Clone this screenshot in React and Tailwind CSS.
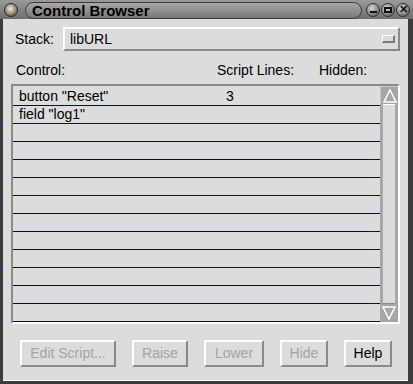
import React from "react";

const rows = [
  { name: 'button "Reset"', lines: "3" },
  { name: 'field "log1"', lines: "" },
];

function TitleButton({ children }) {
  return (
    <div className="w-[14px] h-[14px] rounded-full bg-[radial-gradient(circle_at_40%_35%,#d8d8d8,#8a8a8a_55%,#3c3c3c)] border border-[#333] flex items-center justify-center">
      {children}
    </div>
  );
}

function Button({ label, disabled, width }) {
  return (
    <div
      className={`h-[27px] ${width} border-t-2 border-l-2 border-b-2 border-r-2 border-t-white border-l-white border-b-[#8a8a8a] border-r-[#8a8a8a] flex items-center justify-center text-[14px] ${
        disabled ? "text-[#a4a4a4]" : "text-black"
      }`}
    >
      {label}
    </div>
  );
}

export default function App() {
  const allRows = Array.from({ length: 13 }, (_, i) => rows[i] || { name: "", lines: "" });

  return (
    <div className="w-[413px] h-[384px] flex flex-col bg-[#3c3c3c] font-['Liberation_Sans',Arial,sans-serif] overflow-hidden">
      {/* title bar */}
      <div className="h-[19px] shrink-0 flex items-center bg-[linear-gradient(#9a9a9a,#6e6e6e)] pl-[4px] pr-[1px]">
        <div className="w-[14px] h-[14px] rounded-full bg-[radial-gradient(circle_at_45%_40%,#f4ece2,#a89888_45%,#3a3432)] border border-[#2a2a2a]" />
        <div className="ml-[7px] w-[337px] h-[17px] mt-[2px] rounded-[9px] border border-[#3a3a3a] bg-[linear-gradient(#a8a8a8,#787878)] pl-[6px] flex items-center text-[15px] leading-[15px] font-bold text-black">
          Control Browser
        </div>
        <div className="ml-[4px] flex gap-[1px]">
          <TitleButton>
            <div className="w-[7px] h-[2px] bg-[#111] mt-[5px]" />
          </TitleButton>
          <TitleButton>
            <div className="w-[8px] h-[6px] border-[2px] border-[#111]" />
          </TitleButton>
          <TitleButton>
            <span className="text-[11px] leading-none font-bold text-[#111]">✕</span>
          </TitleButton>
        </div>
      </div>

      {/* body */}
      <div className="flex-1 ml-[3px] mr-[5px] mb-[3px] bg-[#dcdcdc] border-b border-b-white flex flex-col text-[14px] text-black">
        {/* stack row */}
        <div className="mt-[8px] h-[24px] flex items-center pl-[12px] pr-[8px]">
          <div className="w-[48px]">Stack:</div>
          <div className="flex-1 h-[24px] border-t-2 border-l-2 border-t-white border-l-white border-b-2 border-r-2 border-b-[#8a8a8a] border-r-[#8a8a8a] flex items-center pl-[5px] pr-[3px]">
            <span className="flex-1">libURL</span>
            <div className="w-[13px] h-[8px] border-t border-l border-t-white border-l-white border-b-2 border-r-2 border-b-[#7a7a7a] border-r-[#7a7a7a]" />
          </div>
        </div>

        {/* headers */}
        <div className="mt-[11px] h-[16px] flex items-center pl-[13px] leading-[16px]">
          <div className="w-[201px]">Control:</div>
          <div className="w-[102px]">Script Lines:</div>
          <div>Hidden:</div>
        </div>

        {/* list */}
        <div className="mt-[6px] mx-[8px] h-[240px] border-t-2 border-l-2 border-t-[#8a8a8a] border-l-[#8a8a8a] border-b-2 border-r-2 border-b-white border-r-white flex">
          <div className="flex-1 pt-[2px]">
            {allRows.map((r, i) => (
              <div key={i} className="h-[18px] border-b border-b-[#000080] flex items-center pl-[6px] leading-[17px]">
                <span className="w-[207px]">{r.name}</span>
                <span>{r.lines}</span>
              </div>
            ))}
          </div>
          <div className="w-[18px] flex flex-col bg-[#a6a6a6]">
            <div className="h-[18px] flex items-center justify-center border-t border-l border-t-[#c8c8c8] border-l-[#c8c8c8]">
              <svg width="14" height="14" viewBox="0 0 14 14">
                <polygon points="7,1 13,13 1,13" fill="#a6a6a6" stroke="#ffffff" strokeWidth="1.5" />
              </svg>
            </div>
            <div className="flex-1 mx-[3px] bg-[#dcdcdc] border-t border-t-white border-b border-b-[#8a8a8a]" />
            <div className="h-[18px] flex items-center justify-center">
              <svg width="14" height="14" viewBox="0 0 14 14">
                <polygon points="1,1 13,1 7,13" fill="#a6a6a6" stroke="#ffffff" strokeWidth="1.5" />
              </svg>
            </div>
          </div>
        </div>

        {/* buttons */}
        <div className="mt-[16px] pl-[17px] flex gap-[16px]">
          <Button label="Edit Script..." disabled width="w-[96px]" />
          <Button label="Raise" disabled width="w-[56px]" />
          <Button label="Lower" disabled width="w-[60px]" />
          <Button label="Hide" disabled width="w-[48px]" />
          <Button label="Help" width="w-[48px]" />
        </div>
      </div>
    </div>
  );
}
